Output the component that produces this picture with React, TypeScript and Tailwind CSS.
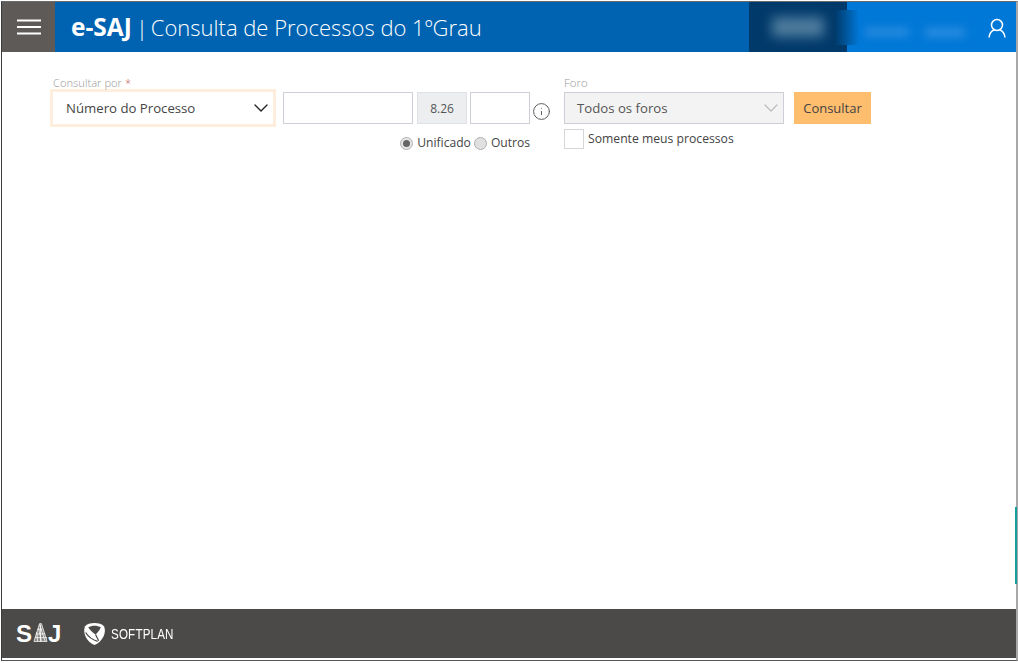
import { ChevronDown, Info } from 'lucide-react';

const font = { fontFamily: '"Open Sans", "Noto Sans", sans-serif' };

function SajLogo() {
  return (
    <div className="flex items-center text-white font-['Liberation_Sans',sans-serif] font-bold text-[24px] leading-none">
      <span>S</span>
      <svg viewBox="0 0 16 20" className="w-[15px] h-[20px] ml-[1px] mb-[2px]" fill="none" stroke="#ffffff" strokeWidth="0.800">
        <path d="M7 0L1 19H15L9 0Z" fill="#ffffff55" />
        <path d="M7 1L13 19M6 5L9 19M4 9L5 19M8 1V19M2 15H15M3 11H13M5 6H10" />
      </svg>
      <span>J</span>
    </div>
  );
}

function SoftplanLogo() {
  return (
    <div className="flex items-center gap-[4px]">
      <svg viewBox="0 0 24 24" className="w-[25px] h-[25px]">
        <path d="M3 5C6 1 18 1 21 5C24 10 20 20 12 23C5 21 0 11 3 5Z" fill="#ffffff" />
        <path d="M6 6C9 4 15 4 18 6C17 9 15 11 13 13C10 11 8 9 6 6Z" fill="#4c4a48" />
        <path d="M3.500 11C6 15 10 18 15 19.500M13 13L16 19" stroke="#4c4a48" strokeWidth="1.200" fill="none" />
      </svg>
      <span className="text-white text-[14px] leading-none tracking-[0.2px] font-['Liberation_Sans',sans-serif] origin-left scale-x-[0.83]">SOFTPLAN</span>
    </div>
  );
}

export default function App() {
  return (
    <div className="w-[1018px] h-[663px] bg-white overflow-hidden pl-[1px] pt-[1px] pb-[2px]" style={font}>
      <div className="h-full border-l border-t border-b border-r-2 border-l-[#3c3c3c] border-t-[#6a6a6a] border-b-[#555] border-r-[#a8a8a8] flex flex-col relative">
        <header className="h-[50px] flex bg-[#0063b1] shrink-0">
          <button className="w-[53px] bg-[#5d5a58] flex items-center justify-center">
            <svg viewBox="0 0 24 16" className="w-[24px] h-[16px]" stroke="#ffffff" strokeWidth="2">
              <path d="M0 1.500H24M0 8H24M0 14.500H24" />
            </svg>
          </button>
          <h1 className="flex items-center pl-[16px] text-white text-[22px] leading-none flex-1">
            <span className="font-bold text-[24.500px]">e-SAJ</span>
            <span className="font-light ml-[4px]">|</span>
            <span className="font-light ml-[3px]">Consulta de Processos do 1ºGrau</span>
          </h1>
          <div className="w-[98px] bg-[#003a6b] flex items-center justify-center">
            <div className="w-[52px] h-[20px] bg-[#4d7b9d] blur-[6px]" />
          </div>
          <div className="w-[169px] bg-[#0078d7] relative flex items-center">
            <div className="absolute left-[-12px] top-[8px] h-[35px] w-[24px] bg-gradient-to-r from-[#003a6b] to-[#0078d7]" />
            <div className="ml-[18px] w-[44px] h-[8px] mt-[10px] bg-[#2b8ce0] blur-[4px]" />
            <div className="ml-[16px] w-[40px] h-[9px] mt-[10px] bg-[#2b8ce0] blur-[4px]" />
            <svg viewBox="0 0 18 20" className="absolute right-[10px] top-[16px] w-[18px] h-[20px]" fill="none" stroke="#ffffff" strokeWidth="1.500">
              <circle cx="9" cy="7" r="5.500" />
              <path d="M1 19.500C1.500 15 4.500 12.500 6.500 11.800M17 19.500C16.500 15 13.500 12.500 11.500 11.800" />
            </svg>
          </div>
        </header>

        <main className="flex-1 flex items-start pl-[48px] pt-[24px] text-[#444]">
          <div className="w-[226px]">
            <label className="block pl-[3px] text-[11.200px] leading-[13px] text-[#999] font-light h-[13px]">
              Consultar por <span className="text-[#c0504d]">*</span>
            </label>
            <div className="h-[38px] border-[3px] border-[#ffeedd] bg-white flex items-center justify-between pl-[13px] text-[13.200px] text-[#444]">
              <span className="pt-[1px]">Número do Processo</span>
              <ChevronDown className="w-[24px] h-[24px] text-[#222]" strokeWidth={1.4} />
            </div>
          </div>

          <div className="ml-[7px] w-[268px] pt-[16px]">
            <div className="flex items-center h-[32px]">
              <input className="w-[130px] h-[32px] border border-[#ccd0d6] bg-white" />
              <div className="w-[50px] h-[32px] ml-[4px] pt-[2px] border border-[#dfe1e4] bg-[#eceef0] flex items-center justify-center text-[12px] text-[#555]">8.26</div>
              <input className="w-[60px] h-[32px] ml-[3px] border border-[#ccd0d6] bg-white" />
              <Info className="w-[19px] h-[19px] ml-[2px] mt-[7px] text-[#555]" strokeWidth={1.2} />
            </div>
            <div className="flex items-center justify-end pr-[21px] mt-[10px] text-[12.100px] leading-[18px] text-[#444]">
              <span className="w-[13px] h-[13px] rounded-full border border-[#b0b0b0] bg-[#e6e6e6] flex items-center justify-center">
                <span className="w-[7px] h-[7px] rounded-full bg-[#666]" />
              </span>
              <span className="ml-[4px]">Unificado</span>
              <span className="ml-[3px] w-[13px] h-[13px] rounded-full border border-[#b0b0b0] bg-[#e0e0e0]" />
              <span className="ml-[4px]">Outros</span>
            </div>
          </div>

          <div className="ml-[13px] w-[220px]">
            <label className="block text-[11.500px] leading-[14px] text-[#999] font-light h-[16px]">Foro</label>
            <div className="h-[32px] border border-[#ccd0d6] bg-[#f3f3f3] flex items-center justify-between pl-[12px] text-[13.200px] text-[#555]">
              <span className="pt-[1px]">Todos os foros</span>
              <ChevronDown className="w-[24px] h-[24px] text-[#bbb]" strokeWidth={1.2} />
            </div>
            <div className="flex items-center mt-[4px]">
              <span className="w-[20px] h-[20px] border border-[#d4d6da] bg-white" />
              <span className="ml-[4px] pt-[1px] text-[12.200px] leading-[20px] text-[#444]">Somente meus processos</span>
            </div>
          </div>

          <button className="ml-[10px] mt-[16px] pt-[1px] w-[77px] h-[32px] bg-[#ffbd6e] text-[13px] text-[#444]">Consultar</button>
        </main>

        <div className="absolute right-[-1px] top-[505px] h-[77px] w-[2px] bg-[#12a0a0]" />

        <footer className="h-[49px] shrink-0 mb-[2px] bg-[#4c4a48] flex items-center pl-[14px] gap-[21px]">
          <SajLogo />
          <SoftplanLogo />
        </footer>
      </div>
    </div>
  );
}
